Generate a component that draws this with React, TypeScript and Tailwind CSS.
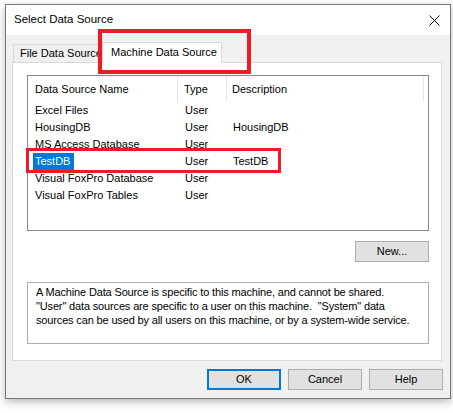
import React from "react";

const rows = [
  { name: "Excel Files", type: "User", desc: "" },
  { name: "HousingDB", type: "User", desc: "HousingDB" },
  { name: "MS Access Database", type: "User", desc: "" },
  { name: "TestDB", type: "User", desc: "TestDB", selected: true },
  { name: "Visual FoxPro Database", type: "User", desc: "" },
  { name: "Visual FoxPro Tables", type: "User", desc: "" },
];

const font = { fontFamily: '"Liberation Sans", Arial, sans-serif' };

const DialogButton: React.FC<{ label: string; primary?: boolean }> = ({ label, primary }) => (
  <button
    className={
      "w-[74px] h-[21px] flex items-center justify-center bg-[#e1e1e1] text-[11px] text-black " +
      (primary ? "border-2 border-[#0078d7]" : "border border-[#adadad]")
    }
  >
    {label}
  </button>
);

const App: React.FC = () => {
  return (
    <div
      className="relative w-[453px] h-[413px] bg-white pt-[4px] pl-[5px] text-black text-[11px] whitespace-nowrap overflow-hidden"
      style={font}
    >
      {/* Window */}
      <div className="w-[446px] h-[395px] flex flex-col border border-[#767676] bg-[#f0f0f0] shadow-[0_3px_8px_rgba(0,0,0,0.28)]">
        {/* Title bar */}
        <div className="h-[30px] bg-white flex items-center justify-between pl-[8px] pr-[10px] shrink-0">
          <span className="text-[11.5px]">Select Data Source</span>
          <svg width="11" height="11" viewBox="0 0 11 11">
            <path d="M0.5 0.5 L10.5 10.5 M10.5 0.5 L0.5 10.5" stroke="#000" strokeWidth="1" />
          </svg>
        </div>

        {/* Tabs */}
        <div className="mt-[7px] ml-[6px] w-[430px]">
          <div className="flex items-end h-[20px] pl-[1px]">
            <div className="h-[18px] w-[91px] border border-b-0 border-[#d9d9d9] bg-[#f0f0f0] pl-[6px] flex items-center overflow-visible">
              File Data Source
            </div>
            <div className="relative z-10 -ml-[2px] -mb-px h-[21px] w-[120px] border border-b-0 border-[#d9d9d9] bg-white pl-[8px] flex items-center pb-[2px]">
              Machine Data Source
            </div>
          </div>

          {/* Panel */}
          <div className="h-[299px] border border-[#d9d9d9] bg-white pl-[14px] pt-[12px]">
            {/* List */}
            <div className="w-[402px] h-[156px] border border-[#828790] bg-white">
              <div className="flex h-[26px]">
                <div className="w-[150px] border-r border-[#e5e5e5] pl-[7px] flex items-center">Data Source Name</div>
                <div className="w-[49px] border-r border-[#e5e5e5] pl-[6px] flex items-center">Type</div>
                <div className="w-[197px] border-r border-[#e5e5e5] pl-[5px] flex items-center">Description</div>
              </div>
              {rows.map((r) => (
                <div key={r.name} className="flex h-[17px]">
                  <div className="w-[150px] pl-[5px] flex">
                    <span
                      className={
                        "pl-[2px] pr-[4px] flex items-center " + (r.selected ? "bg-[#0078d7] text-white" : "")
                      }
                    >
                      {r.name}
                    </span>
                  </div>
                  <div className="w-[49px] pl-[7px] flex items-center">{r.type}</div>
                  <div className="pl-[6px] flex items-center">{r.desc}</div>
                </div>
              ))}
            </div>

            <div className="w-[402px] flex justify-end mt-[10px]">
              <DialogButton label="New..." />
            </div>

            {/* Info */}
            <div className="mt-[20px] w-[402px] h-[62px] border border-[#adadad] pl-[8px] pt-[2px] leading-[14px] text-[11px] tracking-[-0.15px]">
              <div>A Machine Data Source is specific to this machine, and cannot be shared.</div>
              <div>"User" data sources are specific to a user on this machine.&nbsp; "System" data</div>
              <div>sources can be used by all users on this machine, or by a system-wide service.</div>
            </div>
          </div>
        </div>

        {/* Buttons */}
        <div className="mt-[8px] pr-[7px] flex justify-end gap-[7px]">
          <DialogButton label="OK" primary />
          <DialogButton label="Cancel" />
          <DialogButton label="Help" />
        </div>
      </div>

      {/* Red annotations */}
      <div className="absolute left-[98px] top-[29px] w-[153px] h-[45px] border-[4px] border-[#ed1c24] pointer-events-none" />
      <div className="absolute left-[26px] top-[148px] w-[255px] h-[25px] border-[3px] border-[#ed1c24] pointer-events-none" />
    </div>
  );
};

export default App;
